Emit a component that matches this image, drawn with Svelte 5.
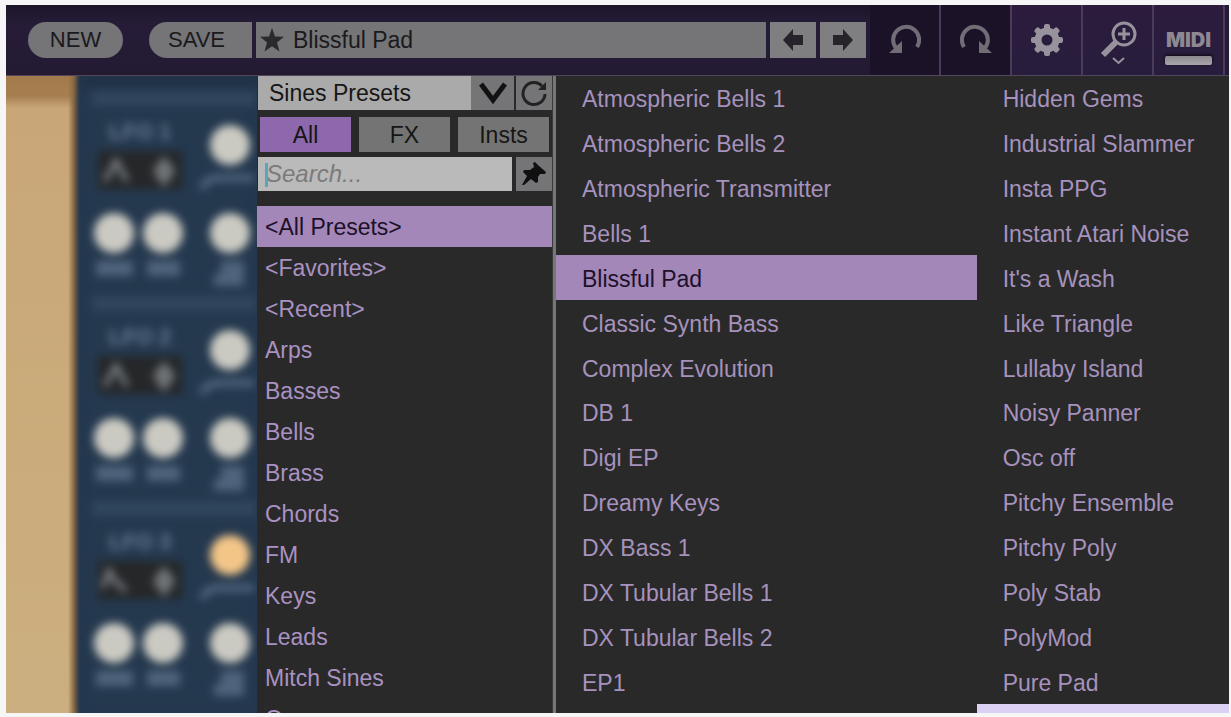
<script>
  const categories = [
    '<All Presets>', '<Favorites>', '<Recent>', 'Arps', 'Basses', 'Bells', 'Brass',
    'Chords', 'FM', 'Keys', 'Leads', 'Mitch Sines', 'Organs'
  ];
  const columns = [
    [
      'Atmospheric Bells 1', 'Atmospheric Bells 2', 'Atmospheric Transmitter', 'Bells 1',
      'Blissful Pad', 'Classic Synth Bass', 'Complex Evolution', 'DB 1', 'Digi EP',
      'Dreamy Keys', 'DX Bass 1', 'DX Tubular Bells 1', 'DX Tubular Bells 2', 'EP1'
    ],
    [
      'Hidden Gems', 'Industrial Slammer', 'Insta PPG', 'Instant Atari Noise',
      "It's a Wash", 'Like Triangle', 'Lullaby Island', 'Noisy Panner', 'Osc off',
      'Pitchy Ensemble', 'Pitchy Poly', 'Poly Stab', 'PolyMod', 'Pure Pad'
    ]
  ];
  const tabs = ['All', 'FX', 'Insts'];
  const lfos = [
    { n: 1, lit: false, wave: 'M25 91 L36 71 L47 91' },
    { n: 2, lit: false, wave: 'M25 91 L36 71 L47 91' },
    { n: 3, lit: true, wave: 'M23 88 L29 71 L36 82 L46 91' }
  ];
  const teeth = [0, 45, 90, 135, 180, 225, 270, 315];

  let category = $state('<All Presets>');
  let preset = $state('Blissful Pad');
  let tab = $state('All');
  let query = $state('');
</script>

<div class="app">
  <header class="toolbar">
    <button class="pill new">NEW</button>
    <button class="pill save">SAVE</button>
    <button class="name">
      <svg width="24" height="24" viewBox="0 0 24 24" aria-hidden="true">
        <path d="M12 0 L15 8.500 L24 8.800 L17 14.500 L19.500 23.500 L12 18.300 L4.500 23.500 L7 14.500 L0 8.800 L9 8.500 Z" fill="#2a2a2c" />
      </svg>
      <span>{preset}</span>
    </button>
    <button class="step" aria-label="Previous preset">
      <svg width="22" height="22" viewBox="0 0 22 22"><path d="M1 11 L11 0 V6 H21 V16 H11 V22 Z" fill="#26242a" /></svg>
    </button>
    <button class="step" aria-label="Next preset">
      <svg width="22" height="22" viewBox="0 0 22 22"><path d="M21 11 L11 0 V6 H1 V16 H11 V22 Z" fill="#26242a" /></svg>
    </button>
    <div class="tools">
      <button class="tool dark" aria-label="Undo">
        <svg width="36" height="36" viewBox="0 0 36 36">
          <path d="M9 26 A13 13 0 1 1 30 25" fill="none" stroke="#726c77" stroke-width="4" />
          <path d="M2 31 H15 V19 Z" fill="#726c77" />
        </svg>
      </button>
      <button class="tool dark" aria-label="Redo">
        <svg width="36" height="36" viewBox="0 0 36 36">
          <path d="M27 26 A13 13 0 1 0 6 25" fill="none" stroke="#726c77" stroke-width="4" />
          <path d="M34 31 H21 V19 Z" fill="#726c77" />
        </svg>
      </button>
      <button class="tool" aria-label="Settings">
        <svg width="34" height="34" viewBox="-17 -17 34 34">
          <circle r="9" fill="none" stroke="#97929b" stroke-width="7" />
          {#each teeth as a}
            <rect x="-3" y="-16" width="6" height="7" rx="2" fill="#97929b" transform="rotate({a})" />
          {/each}
        </svg>
      </button>
      <button class="tool" aria-label="Zoom">
        <svg width="44" height="50" viewBox="0 0 44 50">
          <g fill="none" stroke="#97929b">
            <circle cx="28" cy="19" r="11" stroke-width="3" />
            <path d="M28 13 V25 M22 19 H34" stroke-width="3" />
            <path d="M20 27 L7 40" stroke-width="6" />
            <path d="M17 43 L22.500 48 L28 43" stroke-width="2" />
          </g>
        </svg>
      </button>
      <button class="tool midi">
        <span>MIDI</span>
        <i></i>
      </button>
      <div class="end"></div>
    </div>
  </header>

  <div class="body">
    <section class="synth" aria-label="Oscillator panel">
      <div class="wood"></div>
      <div class="panel">
        {#each lfos as lfo}
          <svg width="176" height="205" viewBox="0 0 176 205">
            <rect x="12" y="1" width="164" height="15" fill="#30465c" />
            <text x="29" y="49" font-size="22" font-weight="bold" fill="#6b7f96">LFO {lfo.n}</text>
            <rect x="18" y="61" width="84" height="38" fill="#252729" />
            <path d={lfo.wave} fill="none" stroke="#7d8184" stroke-width="5" />
            <path d="M84 66 L94 78 V84 L84 97 L74 84 V78 Z" fill="#6f7376" />
            <circle cx="150" cy="55" r="20" fill={lfo.lit ? '#f3c688' : '#cbcac2'} />
            <path d="M122 99 Q126 88 138 88 H174" fill="none" stroke="#50657e" stroke-width="7" />
            <circle cx="34" cy="143" r="20" fill="#cbcac2" />
            <circle cx="83" cy="143" r="20" fill="#cbcac2" />
            <circle cx="150" cy="143" r="20" fill="#cbcac2" />
            <rect x="16" y="171" width="37" height="15" fill="#4f647c" />
            <rect x="67" y="171" width="33" height="15" fill="#4f647c" />
            <path d="M141 171 H164 V196 H134 V184 H141 Z" fill="#4f647c" />
          </svg>
        {/each}
      </div>
    </section>

    <aside class="side">
      <div class="bank">
        <div class="pick">
          <select aria-label="Preset bank">
            <option>Sines Presets</option>
          </select>
          <svg width="30" height="24" viewBox="0 0 30 24" aria-hidden="true">
            <path d="M3 3 L15 19 L27 3" fill="none" stroke="#121212" stroke-width="5" />
          </svg>
        </div>
        <button class="square" aria-label="Reload presets">
          <svg width="28" height="28" viewBox="0 0 28 28">
            <path d="M22 7 A11 11 0 1 0 25 15" fill="none" stroke="#222" stroke-width="3" />
            <path d="M26 3 V11 H18 Z" fill="#222" />
          </svg>
        </button>
      </div>
      <div class="tabs">
        {#each tabs as t}
          <button class:on={tab === t} onclick={() => (tab = t)}>{t}</button>
        {/each}
      </div>
      <div class="find">
        <div class="field">
          <input type="text" placeholder="Search..." aria-label="Search presets" bind:value={query} />
          <span class="caret"></span>
        </div>
        <button class="square" aria-label="Pin browser">
          <svg width="26" height="26" viewBox="0 0 26 26">
            <path d="M14 1 L18 5 L25 11 L24 13 L19 13 L17 16 L17 21 L15 22 L10 18 L3 24 L1 24 L6 15 L2 11 L3 9 L9 9 L13 6 L12 2 Z" fill="#101010" />
          </svg>
        </button>
      </div>
      <ul class="cats">
        {#each categories as c}
          <li><button class:on={category === c} onclick={() => (category = c)}>{c}</button></li>
        {/each}
      </ul>
    </aside>

    <main class="presets">
      {#each columns as list}
        <ul>
          {#each list as p}
            <li><button class:on={preset === p} onclick={() => (preset = p)}>{p}</button></li>
          {/each}
        </ul>
      {/each}
      <div class="next"></div>
    </main>
  </div>
</div>

<style>
  :global(body) {
    margin: 0;
    background: #f6f6f7;
  }
  .app {
    box-sizing: border-box;
    height: 100vh;
    padding: 5px 2px 4px 6px;
    display: flex;
    flex-direction: column;
    font: 23px/28px 'Liberation Sans', Arial, sans-serif;
    overflow: hidden;
  }
  button,
  input,
  select {
    font: inherit;
    border: 0;
    border-radius: 0;
    margin: 0;
    padding: 0;
    background: none;
    color: inherit;
  }
  ul {
    list-style: none;
    margin: 0;
    padding: 0;
  }
  svg {
    display: block;
    flex: none;
  }

  .toolbar {
    display: flex;
    align-items: center;
    height: 70px;
    flex: none;
    gap: 4px;
    padding-left: 22px;
    background: linear-gradient(#1d162a, #261c38 30%, #231a32);
    border-bottom: 1px solid #51465a;
    color: #1a1a1c;
  }
  .pill {
    height: 36px;
    background: #757477;
    font-size: 22px;
  }
  .new {
    width: 95px;
    border-radius: 18px;
    margin-right: 22px;
  }
  .save {
    width: 103px;
    border-radius: 18px 0 0 18px;
    padding-right: 8px;
  }
  .name {
    flex: 1;
    height: 36px;
    display: flex;
    align-items: center;
    gap: 9px;
    padding-left: 4px;
    background: #757477;
    text-align: left;
  }
  .step {
    width: 46px;
    height: 36px;
    display: grid;
    place-items: center;
    background: #7f7e81;
  }
  .tools {
    display: flex;
    align-self: stretch;
  }
  .tool {
    width: 71px;
    display: grid;
    place-items: center;
    box-sizing: border-box;
    border-right: 2px solid #4b3b5b;
    background: linear-gradient(#2c1b3d, #281d3c);
  }
  .dark {
    background: #1b1228;
  }
  .midi {
    align-content: center;
    padding-top: 15px;
    gap: 6px;
    color: #8d8891;
    font: 900 20px/20px Inter, sans-serif;
  }
  .midi i {
    width: 47px;
    height: 9px;
    border-radius: 2px;
    background: linear-gradient(#8c888e, #a9a6aa);
    box-shadow: 0 -1px 3px #0b0711;
  }
  .end {
    width: 4px;
    background: #251a35;
  }

  .body {
    flex: 1;
    min-height: 0;
    display: flex;
    background: #292929;
  }
  .synth {
    width: 251px;
    flex: none;
    display: flex;
    overflow: hidden;
    background: #24384e;
  }
  .wood {
    width: 74px;
    flex: none;
    background:
      linear-gradient(90deg, transparent 62px, #8c6a42 68px, #24384e 74px),
      linear-gradient(#a37a4b, #a67f50 20px, #c9a678 32px, #caab7a 50%, #ccaf80);
  }
  .panel {
    flex: 1;
    padding-top: 14px;
    filter: blur(4px);
    background: linear-gradient(#1f2f43, #24384e 20px);
  }

  .side {
    width: 296px;
    flex: none;
    display: flex;
    flex-direction: column;
    box-sizing: border-box;
    border-right: 1px solid #3a3a3a;
    overflow: hidden;
    color: #161616;
  }
  .bank,
  .find {
    display: flex;
    gap: 2px;
    padding-left: 1px;
  }
  .bank {
    height: 34px;
    flex: none;
  }
  .find {
    height: 34px;
    gap: 4px;
    flex: none;
  }
  .pick {
    flex: 1;
    display: grid;
    align-items: center;
    background: linear-gradient(90deg, #aaaaab calc(100% - 43px), #757577 calc(100% - 43px));
  }
  .pick > * {
    grid-area: 1 / 1;
  }
  .pick select {
    appearance: none;
    height: 34px;
    padding-left: 11px;
  }
  .pick svg {
    justify-self: end;
    margin-right: 6px;
    pointer-events: none;
  }
  .square {
    width: 36px;
    display: grid;
    place-items: center;
    background: #757577;
  }
  .tabs {
    display: grid;
    grid-template-columns: repeat(3, 1fr);
    gap: 8px;
    height: 35px;
    flex: none;
    padding: 0 3px;
    margin: 7px 0 5px;
  }
  .tabs button {
    background: #747474;
  }
  .tabs .on {
    background: #8d68ad;
  }
  .field {
    flex: 1;
    position: relative;
  }
  .field input {
    box-sizing: border-box;
    width: 100%;
    height: 34px;
    padding-left: 8px;
    font-size: 24px;
    background: #bababa;
    outline: 0;
  }
  .field input::placeholder {
    color: #7b7b7b;
    font-style: italic;
    opacity: 1;
  }
  .caret {
    position: absolute;
    left: 7px;
    top: 6px;
    width: 3px;
    height: 24px;
    background: #5aa5b8;
  }
  .cats {
    margin-top: 15px;
    color: #a992c2;
  }
  .cats button {
    display: block;
    width: 100%;
    height: 41px;
    padding-left: 8px;
    text-align: left;
  }
  .cats .on,
  .presets .on {
    background: #a387b9;
    color: #1d1029;
  }

  .presets {
    position: relative;
    flex: 1;
    display: grid;
    grid-template-columns: 5fr 3fr;
    padding-bottom: 9px;
    border-left: 3px solid #777;
    color: #a692bd;
  }
  .presets ul {
    display: grid;
    grid-template-rows: repeat(14, 1fr);
  }
  .presets li {
    display: flex;
    min-height: 0;
  }
  .presets button {
    flex: 1;
    padding: 2px 0 0 26px;
    text-align: left;
    white-space: nowrap;
  }
  .next {
    position: absolute;
    left: 62.5%;
    right: 0;
    bottom: 0;
    height: 9px;
    background: #ddd0f5;
  }
</style>
